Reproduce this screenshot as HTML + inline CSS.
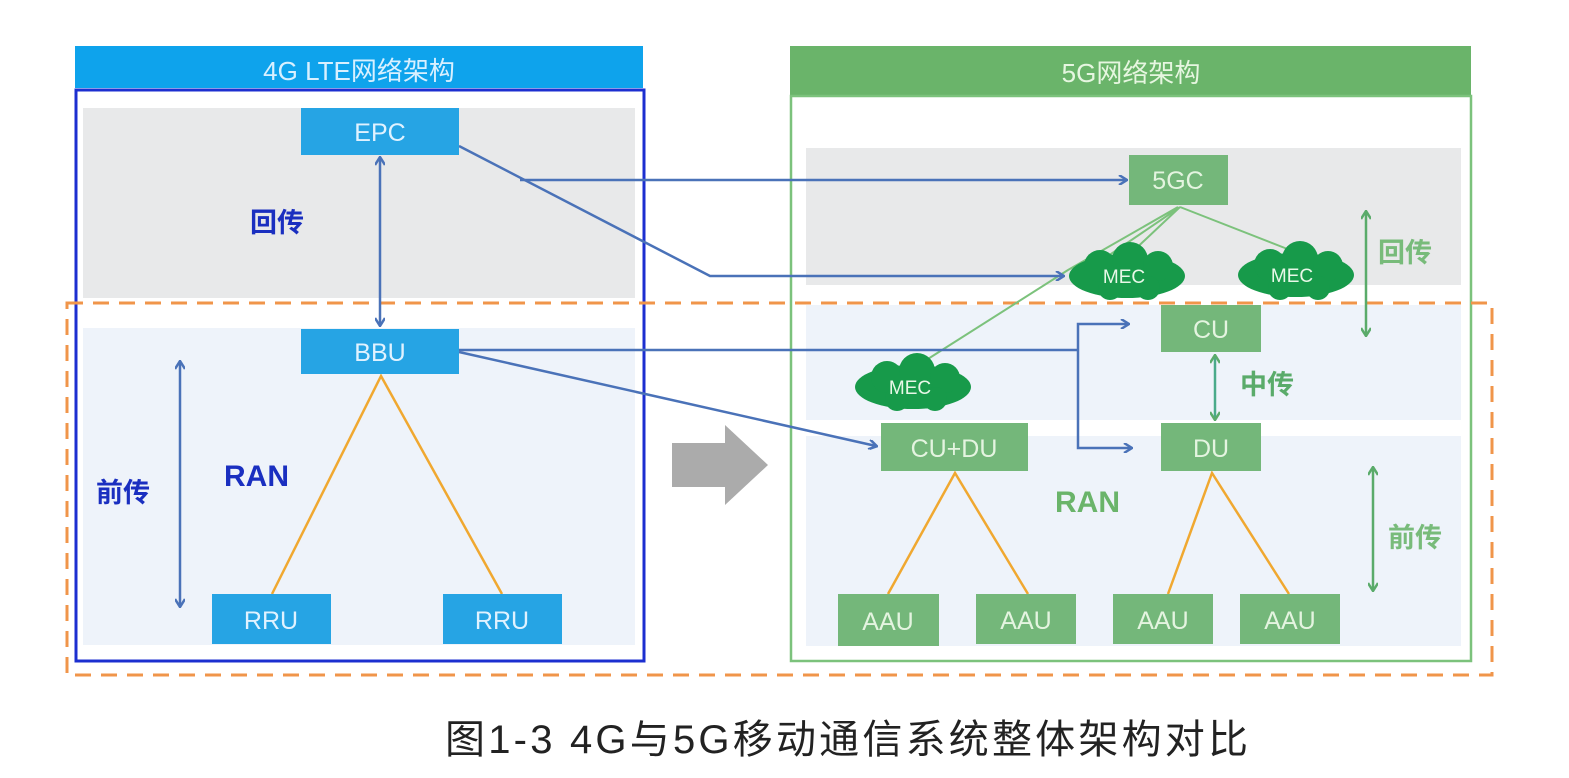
<!DOCTYPE html>
<html><head><meta charset="utf-8"><style>
html,body{margin:0;padding:0;background:#fff;width:1569px;height:778px;overflow:hidden}
svg text{font-family:"Liberation Sans","Noto Sans CJK SC",sans-serif}
</style></head><body>
<svg width="1569" height="778" viewBox="0 0 1569 778" xmlns="http://www.w3.org/2000/svg">
<defs>
<marker id="ab" markerWidth="10" markerHeight="10" refX="8" refY="5" orient="auto-start-reverse" markerUnits="userSpaceOnUse"><path d="M1,0 L9,5 L1,10" fill="none" stroke="#4a72b8" stroke-width="2.5"/></marker>
<marker id="ag" markerWidth="10" markerHeight="10" refX="8" refY="5" orient="auto-start-reverse" markerUnits="userSpaceOnUse"><path d="M1,0 L9,5 L1,10" fill="none" stroke="#5aab6a" stroke-width="2.5"/></marker>
</defs>
<rect x="83" y="108" width="552" height="190" fill="#e8e9ea"/>
<rect x="83" y="328" width="552" height="317" fill="#eef3fa"/>
<rect x="806" y="148" width="655" height="137" fill="#e8e9ea"/>
<rect x="806" y="305" width="655" height="115" fill="#eef3fa"/>
<rect x="806" y="436" width="655" height="210" fill="#eef3fa"/>
<rect x="75" y="46" width="568" height="42" fill="#0ea3ec"/>
<text x="359" y="80" font-size="26" fill="#d8f0ff" text-anchor="middle">4G LTE网络架构</text>
<rect x="790" y="46" width="681" height="49" fill="#6ab46a"/>
<text x="1131" y="82" font-size="26" fill="#e6f6e0" text-anchor="middle">5G网络架构</text>
<rect x="76" y="90" width="568" height="571" fill="none" stroke="#1c2fd0" stroke-width="3"/>
<rect x="791" y="96" width="680" height="565" fill="none" stroke="#7cc27c" stroke-width="2.5"/>
<rect x="67" y="303" width="1425" height="372" fill="none" stroke="#f0954a" stroke-width="3" stroke-dasharray="16,10"/>
<path d="M672,443 L725,443 L725,425 L768,465 L725,505 L725,487 L672,487 Z" fill="#ababab"/>
<g stroke="#f0a830" stroke-width="2.5" fill="none">
<path d="M272,594 L381,376 L502,594"/>
<path d="M888,594 L955,473 L1028,594"/>
<path d="M1168,594 L1212,473 L1289,594"/>
</g>
<g stroke="#7cc27c" stroke-width="2" fill="none">
<path d="M1180,207 L1105,258 M1180,207 L1128,256 M1180,207 L1290,250 M1178,207 L1068,270 L920,364"/>
</g>
<g stroke="#4a72b8" stroke-width="2.5" fill="none">
<path d="M380,158 L380,325" marker-start="url(#ab)" marker-end="url(#ab)"/>
<path d="M180,362 L180,606" marker-start="url(#ab)" marker-end="url(#ab)"/>
<path d="M520,180 L1126,180" marker-end="url(#ab)"/>
<path d="M459,146 L710,276 L1063,276" marker-end="url(#ab)"/>
<path d="M459,350 L1078,350"/>
<path d="M1078,350 L1078,324 L1128,324" marker-end="url(#ab)"/>
<path d="M1078,350 L1078,448 L1131,448" marker-end="url(#ab)"/>
<path d="M459,352 L876,446" marker-end="url(#ab)"/>
</g>
<g stroke="#5aab6a" stroke-width="2.5" fill="none">
<path d="M1366,212 L1366,335" marker-start="url(#ag)" marker-end="url(#ag)"/>
<path d="M1373,468 L1373,590" marker-start="url(#ag)" marker-end="url(#ag)"/>
<path d="M1215,356 L1215,419" stroke="#4aaa8a" marker-start="url(#ag)" marker-end="url(#ag)"/>
</g>
<g fill="#26a4e4">
<rect x="301" y="108" width="158" height="47"/>
<rect x="301" y="329" width="158" height="45"/>
<rect x="212" y="594" width="119" height="50"/>
<rect x="443" y="594" width="119" height="50"/>
</g>
<g fill="#e0f2ff" font-size="25" text-anchor="middle">
<text x="380" y="141">EPC</text>
<text x="380" y="361">BBU</text>
<text x="271" y="629">RRU</text>
<text x="502" y="629">RRU</text>
</g>
<g fill="#74b77a">
<rect x="1129" y="155" width="99" height="50"/>
<rect x="1161" y="305" width="100" height="47"/>
<rect x="1161" y="423" width="100" height="48"/>
<rect x="881" y="423" width="147" height="48"/>
<rect x="838" y="594" width="101" height="52"/>
<rect x="976" y="594" width="100" height="50"/>
<rect x="1113" y="594" width="100" height="50"/>
<rect x="1240" y="594" width="100" height="50"/>
</g>
<g fill="#e4f4e0" font-size="25" text-anchor="middle">
<text x="1178" y="189">5GC</text>
<text x="1211" y="338">CU</text>
<text x="1211" y="457">DU</text>
<text x="954" y="457">CU+DU</text>
<text x="888" y="630">AAU</text>
<text x="1026" y="629">AAU</text>
<text x="1163" y="629">AAU</text>
<text x="1290" y="629">AAU</text>
</g>
<g fill="#179a4a">
<ellipse cx="1127" cy="276" rx="58" ry="22"/><circle cx="1100" cy="266" r="16"/><circle cx="1130" cy="260" r="18"/><circle cx="1158" cy="266" r="15"/><circle cx="1110" cy="288" r="12"/><circle cx="1148" cy="288" r="12"/>
<ellipse cx="1296" cy="275" rx="58" ry="22"/><circle cx="1270" cy="265" r="16"/><circle cx="1300" cy="259" r="18"/><circle cx="1328" cy="266" r="15"/><circle cx="1280" cy="288" r="12"/><circle cx="1318" cy="288" r="12"/>
<ellipse cx="913" cy="387" rx="58" ry="22"/><circle cx="887" cy="377" r="16"/><circle cx="917" cy="371" r="18"/><circle cx="945" cy="378" r="15"/><circle cx="897" cy="399" r="12"/><circle cx="935" cy="399" r="12"/>
</g>
<g fill="#e8f8e8" font-size="19" text-anchor="middle">
<text x="1124" y="283">MEC</text>
<text x="1292" y="282">MEC</text>
<text x="910" y="394">MEC</text>
</g>
<g font-weight="bold" font-size="27">
<text x="250" y="232" fill="#1a2fc0">回传</text>
<text x="96" y="502" fill="#1a2fc0">前传</text>
<text x="224" y="486" fill="#1a2fc0" font-size="30">RAN</text>
<text x="1378" y="262" fill="#78bb7a">回传</text>
<text x="1240" y="394" fill="#5aab6a">中传</text>
<text x="1388" y="547" fill="#78bb7a">前传</text>
<text x="1055" y="512" fill="#6ab46a" font-size="30">RAN</text>
</g>
<text x="445" y="753" font-size="40" fill="#222" textLength="803" lengthAdjust="spacing">图1-3  4G与5G移动通信系统整体架构对比</text>
</svg>
</body></html>
